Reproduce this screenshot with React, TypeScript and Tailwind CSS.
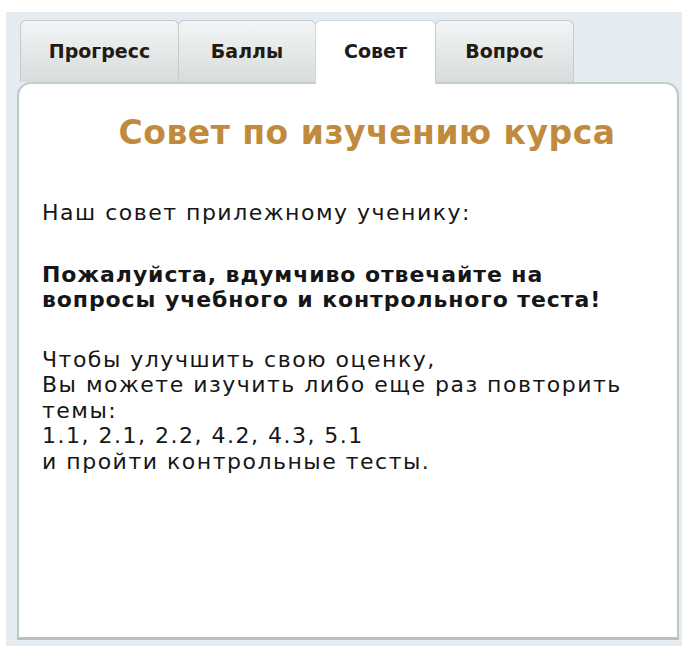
import React, { useState } from "react";

const tabs = [
  { id: "progress", label: "Прогресс", width: "w-[159px]" },
  { id: "points", label: "Баллы", width: "w-[138px]" },
  { id: "advice", label: "Совет", width: "w-[121px]" },
  { id: "question", label: "Вопрос", width: "w-[139px]" },
];

export default function App() {
  const [active, setActive] = useState("advice");

  return (
    <div className="min-h-[646px] bg-white pt-[12px] pl-[6px] font-['DejaVu_Sans',sans-serif]">
      <div className="h-[634px] bg-[#e4ecf2] pl-[11px] pr-[3px] pt-[8px]">
        {/* tab strip */}
        <div className="flex pl-[3px]">
          {tabs.map((tab) => {
            const isActive = tab.id === active;
            return (
              <button
                key={tab.id}
                type="button"
                onClick={() => setActive(tab.id)}
                className={`${tab.width} relative z-10 -mr-px rounded-t-[6px] border border-b-0 text-[19px] leading-none font-bold ${
                  isActive
                    ? "mb-[-2px] h-[64px] border-[#d3d9d9] bg-white pb-[2px] text-[#1c1c1c]"
                    : "h-[62px] border-[#c5cccc] bg-gradient-to-b from-[#f3f5f5] to-[#d7dcdd] text-[#231a10]"
                }`}
              >
                {tab.label}
              </button>
            );
          })}
        </div>

        {/* panel */}
        <div className="h-[558px] rounded-t-[14px] border-x-[2px] border-t-[2px] border-b-[3px] border-x-[#bcc6c6] border-t-[#c3cccc] border-b-[#b7c1c1] bg-white pl-[23px] pr-[10px]">
          <h1 className="pt-[29px] pl-[25px] text-center text-[33px] leading-[40px] font-bold tracking-[0.5px] text-[#c08b3c]">
            Совет по изучению курса
          </h1>
          <div className="mt-[47px] text-[22px] leading-[25.5px] tracking-[1.5px] text-[#161616]">
            <p>Наш совет прилежному ученику:</p>
            <p className="mt-[36px] font-bold tracking-[0.9px]">
              Пожалуйста, вдумчиво отвечайте на
              <br />
              вопросы учебного и контрольного теста!
            </p>
            <p className="mt-[34px]">
              Чтобы улучшить свою оценку,
              <br />
              Вы можете изучить либо еще раз повторить
              <br />
              темы:
              <br />
              1.1, 2.1, 2.2, 4.2, 4.3, 5.1
              <br />и пройти контрольные тесты.
            </p>
          </div>
        </div>
      </div>
    </div>
  );
}
